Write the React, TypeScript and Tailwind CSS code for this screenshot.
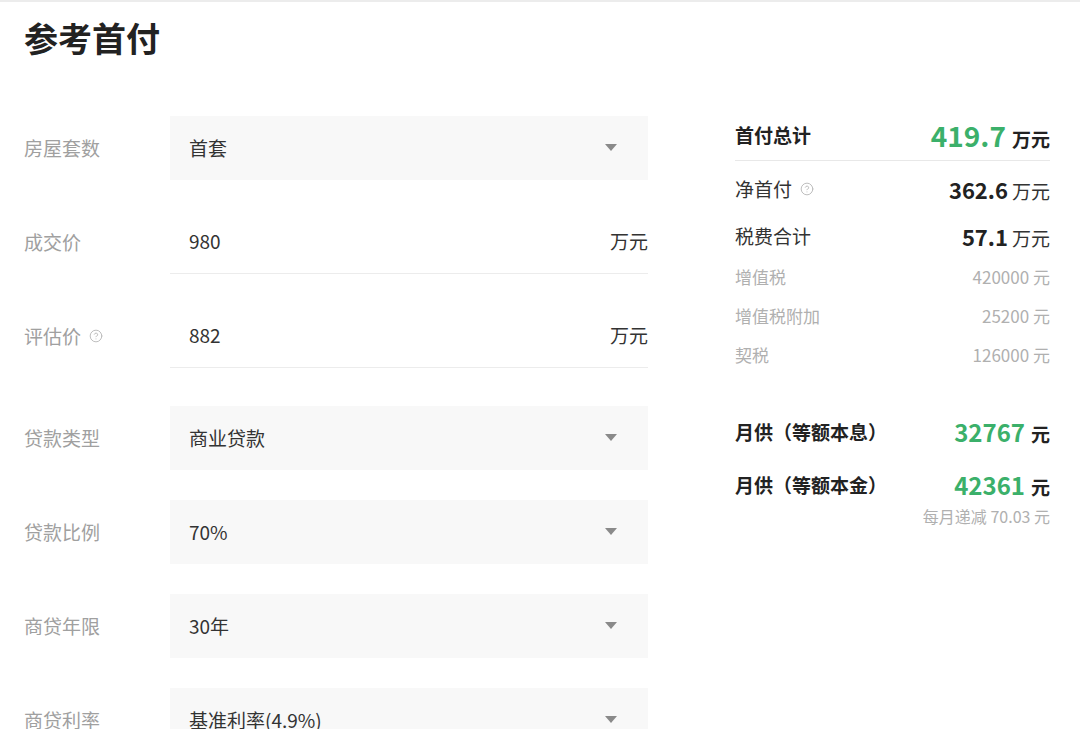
import { CircleHelp } from 'lucide-react'

const font = { fontFamily: '"Noto Sans CJK SC", "Noto Sans", sans-serif' }

function Caret() {
  return (
    <svg width="12" height="8" viewBox="0 0 12 8" className="shrink-0">
      <path d="M0 0 L12 0 L6 7 Z" fill="#8a8a8a" />
    </svg>
  )
}

function Help({ size = 14 }: { size?: number }) {
  return <CircleHelp size={size} strokeWidth={1.5} className="text-[#b5b5b5]" />
}

type Row =
  | { kind: 'select'; label: string; value: string; help?: boolean; mt?: string }
  | { kind: 'input'; label: string; value: string; help?: boolean; mt?: string }

const rows: Row[] = [
  { kind: 'select', label: '房屋套数', value: '首套' },
  { kind: 'input', label: '成交价', value: '980', mt: 'mt-[30px]' },
  { kind: 'input', label: '评估价', value: '882', help: true, mt: 'mt-[30px]' },
  { kind: 'select', label: '贷款类型', value: '商业贷款', mt: 'mt-[38px]' },
  { kind: 'select', label: '贷款比例', value: '70%', mt: 'mt-[30px]' },
  { kind: 'select', label: '商贷年限', value: '30年', mt: 'mt-[30px]' },
  { kind: 'select', label: '商贷利率', value: '基准利率(4.9%)', mt: 'mt-[30px]' },
]

function FormRow({ row }: { row: Row }) {
  return (
    <div className={`flex items-center h-16 ${row.mt ?? ''}`}>
      <div className="w-[146px] flex items-center gap-2 text-[19px] text-[#a0a0a0]">
        {row.label}
        {row.help && <Help />}
      </div>
      {row.kind === 'select' ? (
        <div className="flex-1 h-16 bg-[#f8f8f8] flex items-center justify-between pl-[19px] pr-[31px] text-[19px] text-[#333]">
          <span>{row.value}</span>
          <Caret />
        </div>
      ) : (
        <div className="flex-1 h-16 border-b border-[#ececec] flex items-center justify-between pl-[19px] text-[19px] text-[#333]">
          <span>{row.value}</span>
          <span>万元</span>
        </div>
      )}
    </div>
  )
}

function SmallRow({ label, value }: { label: string; value: string }) {
  return (
    <div className="flex items-center justify-between h-[39px] text-[17px] text-[#b0b0b0]">
      <span>{label}</span>
      <span>{value} 元</span>
    </div>
  )
}

export default function App() {
  return (
    <div className="w-[1080px] h-[729px] overflow-hidden bg-white border-t-2 border-[#ececec]" style={font}>
      {/* Title */}
      <h1 className="pl-6 pt-[12px] text-[34px] font-bold text-[#222] leading-[48px]">参考首付</h1>

      <div className="flex mt-[54px]">
        {/* Form */}
        <div className="w-[648px] pl-6">
          {rows.map(r => (
            <FormRow key={r.label} row={r} />
          ))}
        </div>

        {/* Summary */}
        <div className="ml-[87px] w-[315px] -mt-[2px]">
          <div className="flex items-center justify-between border-b border-[#e8e8e8] pb-1 h-[47px]">
            <span className="text-[19px] font-bold text-[#222]">首付总计</span>
            <span className="flex items-baseline gap-[6px]">
              <span className="text-[28px] font-bold text-[#3bb06a]">419.7</span>
              <span className="text-[19px] font-bold text-[#222]">万元</span>
            </span>
          </div>
          <div className="flex items-center justify-between h-[52px] mt-[2px]">
            <span className="flex items-center gap-2 text-[19px] text-[#333]">
              净首付 <Help />
            </span>
            <span className="flex items-baseline gap-1">
              <span className="text-[22px] font-bold text-[#222]">362.6</span>
              <span className="text-[19px] text-[#333]">万元</span>
            </span>
          </div>
          <div className="flex items-center justify-between h-[42px]">
            <span className="text-[19px] text-[#333]">税费合计</span>
            <span className="flex items-baseline gap-1">
              <span className="text-[22px] font-bold text-[#222]">57.1</span>
              <span className="text-[19px] text-[#333]">万元</span>
            </span>
          </div>
          <SmallRow label="增值税" value="420000" />
          <SmallRow label="增值税附加" value="25200" />
          <SmallRow label="契税" value="126000" />

          <div className="flex items-center justify-between h-[50px] mt-[33px]">
            <span className="text-[19px] font-bold text-[#222]">月供（等额本息）</span>
            <span className="flex items-baseline gap-[6px]">
              <span className="text-[24px] font-bold text-[#3bb06a]">32767</span>
              <span className="text-[19px] font-bold text-[#222]">元</span>
            </span>
          </div>
          <div className="flex items-center justify-between h-[50px] mt-[3px]">
            <span className="text-[19px] font-bold text-[#222]">月供（等额本金）</span>
            <span className="flex items-baseline gap-[6px]">
              <span className="text-[24px] font-bold text-[#3bb06a]">42361</span>
              <span className="text-[19px] font-bold text-[#222]">元</span>
            </span>
          </div>
          <div className="text-right text-[16px] text-[#b0b0b0] -mt-[6px]">每月递减 70.03 元</div>
        </div>
      </div>
    </div>
  )
}
